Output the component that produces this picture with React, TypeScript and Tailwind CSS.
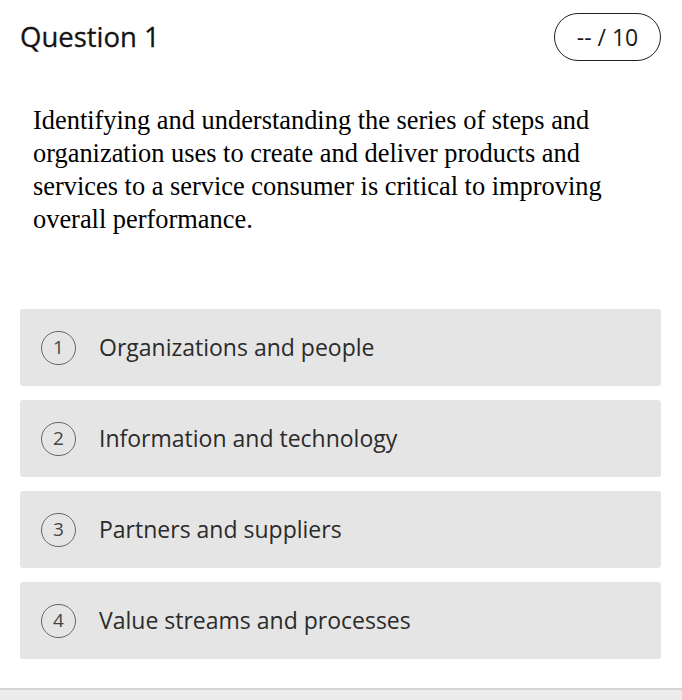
const options = [
  "Organizations and people",
  "Information and technology",
  "Partners and suppliers",
  "Value streams and processes",
];

export default function App() {
  return (
    <div className="flex h-[700px] w-[682px] flex-col bg-white" style={{ fontFamily: '"Open Sans", sans-serif' }}>
      {/* Header */}
      <div className="flex items-center justify-between pl-[20px] pr-[21px] pt-[13px]">
        <h1 className="text-[27.5px] text-[#141414] [-webkit-text-stroke:0.3px_#141414]">Question 1</h1>
        <div className="flex h-[48px] w-[107px] items-center justify-center rounded-full border-[1.5px] border-[#222] text-[23px] text-[#1a1a1a]">
          -- / 10
        </div>
      </div>

      {/* Question text */}
      <p
        className="mt-[43px] pl-[33px] pr-[50px] text-[26.4px] leading-[33px] text-black"
        style={{ fontFamily: '"Liberation Serif", serif' }}
      >
        Identifying and understanding the series of steps and organization uses to create and deliver products and
        services to a service consumer is critical to improving overall performance.
      </p>

      {/* Options */}
      <div className="mt-[73px] flex flex-col gap-[14px] pl-[20px] pr-[21px]">
        {options.map((o, i) => (
          <div key={o} className="flex h-[77px] items-center rounded-[3px] bg-[#e5e5e5] pl-[21px]">
            <span className="flex h-[34px] w-[35px] shrink-0 items-center justify-center rounded-full border-[1.5px] border-[#666] text-[19px] text-[#444]">
              {i + 1}
            </span>
            <span className="ml-[23px] text-[23px] text-[#2b2b2b]">{o}</span>
          </div>
        ))}
      </div>

      <div className="mt-auto h-[12px] border-t-2 border-[#d4d4d4] bg-[#ececec]" />
    </div>
  );
}
